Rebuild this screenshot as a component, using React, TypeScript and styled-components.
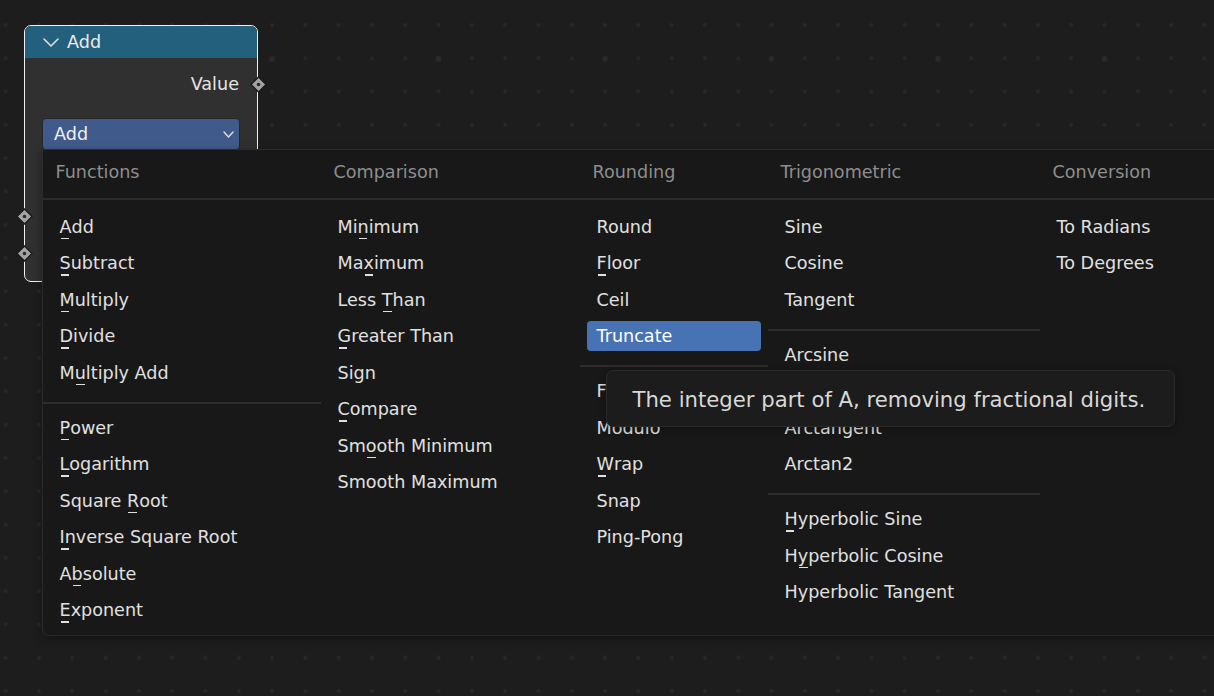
import styled, { createGlobalStyle } from "styled-components";

const GlobalStyle = createGlobalStyle`
  html, body {
    margin: 0;
    padding: 0;
    background: #1d1d1d;
  }
  body {
    font-family: "DejaVu Sans", "Noto Sans", sans-serif;
  }
`;

const COLS = "278px 259px 188px 272px 1fr";

const Canvas = styled.div`
  position: relative;
  width: 1214px;
  height: 696px;
  overflow: hidden;
  background-color: #1d1d1d;
  background-image: radial-gradient(circle, #2a2a2a 0 2.6px, transparent 3.2px),
    radial-gradient(circle, #272727 0 1.6px, transparent 2.2px);
  background-size: 166.5px 166.5px, 33.3px 33.3px;
  background-position: 22.25px -24.25px, 22.35px 8.35px;
  font-family: "DejaVu Sans", "Noto Sans", sans-serif;
  font-size: 17.6px;
`;

/* ---- node ---- */

const Node = styled.div`
  position: absolute;
  left: 24px;
  top: 25px;
  width: 234px;
  height: 257px;
  box-sizing: border-box;
  border: 1px solid #f0f0f0;
  border-radius: 7px;
  background: #303030;
  display: flex;
  flex-direction: column;
`;

const NodeHeader = styled.div`
  height: 32px;
  flex-shrink: 0;
  display: flex;
  align-items: center;
  gap: 8px;
  padding-left: 18px;
  background: #23607e;
  border-radius: 6px 6px 0 0;
  color: #ececec;
`;

const OutputRow = styled.div`
  position: relative;
  height: 32px;
  margin-top: 10px;
  display: flex;
  align-items: center;
  justify-content: flex-end;
  padding-right: 18px;
  color: #e4e4e4;
`;

const SocketWrap = styled.div<{ $side: "left" | "right" }>`
  position: absolute;
  top: 50%;
  ${(p) => (p.$side === "right" ? "right: -9.5px;" : "left: -9.5px;")}
  width: 17px;
  height: 17px;
  margin-top: -8.5px;
  display: flex;
`;

const Dropdown = styled.div`
  height: 32px;
  margin: 18px 17px 0;
  box-sizing: border-box;
  display: flex;
  align-items: center;
  justify-content: space-between;
  padding: 0 5px 0 11px;
  background: #405b8b;
  border: 1px solid #262626;
  border-radius: 4px;
  color: #f0f0f0;
`;

const InputRow = styled.div<{ $first?: boolean }>`
  position: relative;
  height: 37px;
  margin-top: ${(p) => (p.$first ? "47.5px" : "0")};
  display: flex;
  align-items: center;
  padding: 0 17px;
`;

const InputField = styled.div`
  flex: 1;
  height: 28px;
  background: #545454;
  border-radius: 4px;
`;

/* ---- menu ---- */

const Menu = styled.div`
  position: absolute;
  left: 42px;
  top: 149px;
  width: 1200px;
  box-sizing: border-box;
  background: #181818;
  border: 1px solid #2b2b2b;
  border-radius: 0 6px 6px 6px;
  box-shadow: 0 3px 10px rgba(0, 0, 0, 0.35);
`;

const HeaderRow = styled.div`
  display: grid;
  grid-template-columns: ${COLS};
  height: 48px;
  border-bottom: 2px solid #2c2c2c;
`;

const ColumnTitle = styled.div`
  padding: 12px 0 0 12.5px;
  color: #8e8e8e;
`;

const MenuBody = styled.div`
  display: grid;
  grid-template-columns: ${COLS};
  padding: 8.5px 0 6.75px;
`;

const Column = styled.div`
  display: flex;
  flex-direction: column;
`;

const Item = styled.div<{ $active?: boolean }>`
  height: 30px;
  margin: 3.25px 7px;
  padding-left: 9.5px;
  display: flex;
  align-items: center;
  border-radius: 4px;
  white-space: pre;
  color: ${(p) => (p.$active ? "#ffffff" : "#e0e0e0")};
  background: ${(p) => (p.$active ? "#4772b3" : "transparent")};
`;

const ItemText = styled.span`
  white-space: pre;
`;

const Mnemonic = styled.span`
  position: relative;
  &::after {
    content: "";
    position: absolute;
    left: 0.06em;
    bottom: -2.5px;
    width: 0.5em;
    height: 1.5px;
    background: currentColor;
  }
`;

const Separator = styled.div`
  height: 2px;
  margin: 10.5px 0 6px;
  background: #2d2d2d;
`;

const Tooltip = styled.div`
  position: absolute;
  left: 606px;
  top: 370px;
  width: 569px;
  height: 57px;
  box-sizing: border-box;
  display: flex;
  align-items: center;
  padding: 1px 0 0 25.5px;
  background: #1c1c1c;
  border: 1px solid #2a2a2a;
  border-radius: 7px;
  box-shadow: 0 2px 8px rgba(0, 0, 0, 0.3);
  color: #d8d8d8;
  font-size: 21.2px;
  white-space: nowrap;
`;

/* ---- data ---- */

type Entry = { label: string; key?: number; active?: boolean } | "sep";

const it = (label: string, key?: number, active?: boolean): Entry => ({ label, key, active });

const columns: { title: string; items: Entry[] }[] = [
  {
    title: "Functions",
    items: [
      it("Add", 0),
      it("Subtract", 0),
      it("Multiply", 0),
      it("Divide", 0),
      it("Multiply Add", 1),
      "sep",
      it("Power", 0),
      it("Logarithm", 0),
      it("Square Root", 7),
      it("Inverse Square Root", 0),
      it("Absolute", 1),
      it("Exponent", 0),
    ],
  },
  {
    title: "Comparison",
    items: [
      it("Minimum", 2),
      it("Maximum", 2),
      it("Less Than", 5),
      it("Greater Than", 0),
      it("Sign"),
      it("Compare", 0),
      it("Smooth Minimum", 2),
      it("Smooth Maximum"),
    ],
  },
  {
    title: "Rounding",
    items: [
      it("Round"),
      it("Floor", 0),
      it("Ceil"),
      it("Truncate", undefined, true),
      "sep",
      it("Fraction"),
      it("Modulo"),
      it("Wrap", 0),
      it("Snap"),
      it("Ping-Pong"),
    ],
  },
  {
    title: "Trigonometric",
    items: [
      it("Sine"),
      it("Cosine"),
      it("Tangent"),
      "sep",
      it("Arcsine"),
      it("Arccosine"),
      it("Arctangent"),
      it("Arctan2"),
      "sep",
      it("Hyperbolic Sine", 0),
      it("Hyperbolic Cosine", 1),
      it("Hyperbolic Tangent"),
    ],
  },
  {
    title: "Conversion",
    items: [it("To Radians"), it("To Degrees")],
  },
];

/* ---- drawings ---- */

const Socket = () => (
  <svg width="17" height="17" viewBox="0 0 17 17">
    <polygon points="8.5,1 16,8.5 8.5,16 1,8.5" fill="#a3a3a3" stroke="#1a1a1a" strokeWidth="1.3" />
    <circle cx="8.5" cy="8.5" r="1.8" fill="#2c2c2c" />
  </svg>
);

const ChevronDown = ({ w, h, sw }: { w: number; h: number; sw: number }) => (
  <svg width={w} height={h} viewBox={`0 0 ${w} ${h}`}>
    <polyline
      points={`1,1 ${w / 2},${h - 1} ${w - 1},1`}
      fill="none"
      stroke="#dedede"
      strokeWidth={sw}
      strokeLinecap="round"
      strokeLinejoin="round"
    />
  </svg>
);

const Label = ({ text, at }: { text: string; at?: number }) => {
  if (at === undefined) return <ItemText>{text}</ItemText>;
  return (
    <ItemText>
      {text.slice(0, at)}
      <Mnemonic>{text[at]}</Mnemonic>
      {text.slice(at + 1)}
    </ItemText>
  );
};

const App = () => {
  return (
    <Canvas>
      <GlobalStyle />

      <Node>
        <NodeHeader>
          <ChevronDown w={16} h={9} sw={1.6} />
          Add
        </NodeHeader>
        <OutputRow>
          Value
          <SocketWrap $side="right">
            <Socket />
          </SocketWrap>
        </OutputRow>
        <Dropdown>
          Add
          <ChevronDown w={11} h={7} sw={1.4} />
        </Dropdown>
        <InputRow $first>
          <SocketWrap $side="left">
            <Socket />
          </SocketWrap>
          <InputField />
        </InputRow>
        <InputRow>
          <SocketWrap $side="left">
            <Socket />
          </SocketWrap>
          <InputField />
        </InputRow>
      </Node>

      <Menu>
        <HeaderRow>
          {columns.map((c) => (
            <ColumnTitle key={c.title}>{c.title}</ColumnTitle>
          ))}
        </HeaderRow>
        <MenuBody>
          {columns.map((c) => (
            <Column key={c.title}>
              {c.items.map((e, i) =>
                e === "sep" ? (
                  <Separator key={i} />
                ) : (
                  <Item key={i} $active={e.active}>
                    <Label text={e.label} at={e.key} />
                  </Item>
                )
              )}
            </Column>
          ))}
        </MenuBody>
      </Menu>

      <Tooltip>The integer part of A, removing fractional digits.</Tooltip>
    </Canvas>
  );
};

export default App;
